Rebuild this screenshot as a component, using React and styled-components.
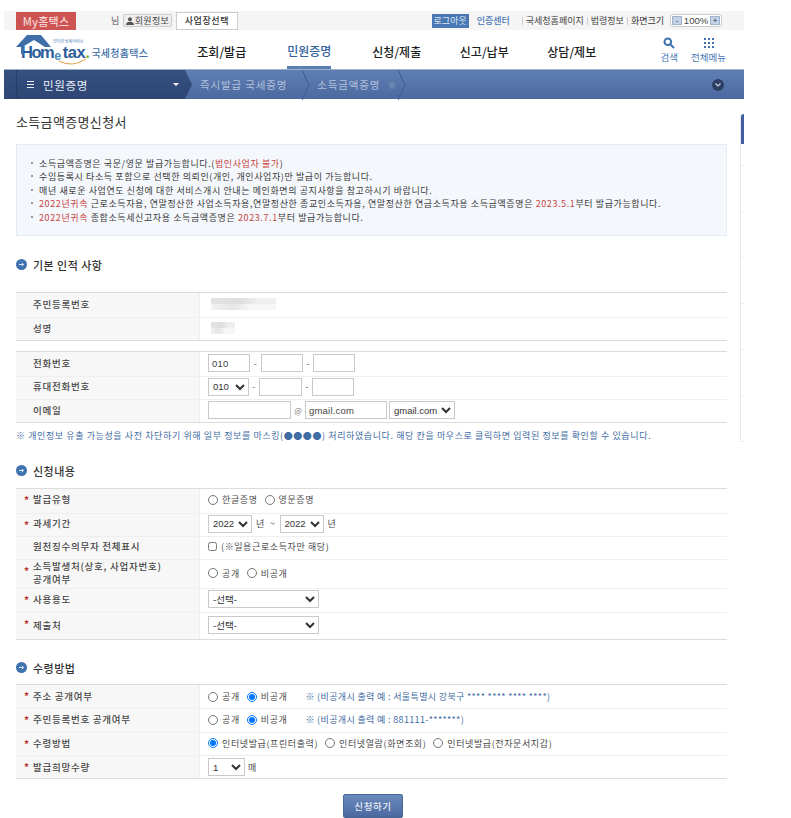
import React from 'react'
import styled, { createGlobalStyle } from 'styled-components'

const GlobalStyle = createGlobalStyle`
  html, body {
    margin: 0;
    padding: 0;
    background: #fff;
  }
  body {
    font-family: "Noto Sans CJK KR", "Noto Sans", "Liberation Sans", sans-serif;
    font-size: 9px;
    letter-spacing: 0.6px;
    color: #3a3a3a;
  }
  input, select {
    font-family: "Liberation Sans", "Noto Sans CJK KR", sans-serif;
    box-sizing: border-box;
  }
`

const Page = styled.div`
  width: 740px;
  margin-left: 4px;
  padding-top: 11px;
`

const TopBar = styled.div`
  height: 19px;
  background: #f5f5f5;
  display: flex;
  align-items: center;
  padding-left: 12px;
`

const MyHome = styled.div`
  width: 60px;
  height: 18px;
  background: #cd5452;
  color: #f6d6d4;
  font-size: 11px;
  font-weight: 500;
  display: flex;
  align-items: center;
  justify-content: center;
  letter-spacing: 0.2px;
`

const Nim = styled.span`
  margin-left: 35px;
  color: #555;
`

const MemberBtn = styled.div`
  margin-left: 3px;
  width: 49px;
  height: 13px;
  border: 1px solid #ccc;
  background: #eee;
  border-radius: 2px;
  box-sizing: border-box;
  display: flex;
  align-items: center;
  justify-content: center;
  gap: 1px;
  color: #444;
  letter-spacing: 0.3px;
  svg { width: 8px; height: 8px; fill: #555; flex: none; }
`

const BizBtn = styled.div`
  margin-left: 4px;
  width: 62px;
  height: 18px;
  box-sizing: border-box;
  border: 1px solid #ccc;
  background: #fff;
  font-weight: 500;
  display: flex;
  align-items: center;
  justify-content: center;
  color: #333;
`

const TopRight = styled.div`
  margin-left: auto;
  margin-right: 22px;
  display: flex;
  align-items: center;
  letter-spacing: 0;
`

const Logout = styled.div`
  width: 37px;
  height: 14px;
  background: #4a78b5;
  color: #dfe8f4;
  display: flex;
  align-items: center;
  justify-content: center;
`

const CertLink = styled.span`
  margin-left: 8px;
  margin-right: 9px;
  color: #4a78b5;
  font-weight: 500;
`

const TopLink = styled.span`
  color: #444;
  padding-left: 3px;
  margin-left: 3px;
  line-height: 8px;
  border-left: 1px solid #ccc;
  &:last-of-type { color: #333; }
`

const ZoomBox = styled.div`
  margin-left: 6px;
  width: 52px;
  height: 13px;
  box-sizing: border-box;
  border: 1px solid #ccc;
  border-radius: 3px;
  background: #fff;
  display: flex;
  align-items: center;
  justify-content: space-between;
  font-family: "Liberation Sans", sans-serif;
  font-size: 9.5px;
  color: #444;
`

const ZoomKey = styled.div`
  width: 10px;
  height: 9px;
  margin: 0 1px;
  background: #c5d3e6;
  border: 1px solid #9fb3cf;
  box-sizing: border-box;
  color: #234;
  font-size: 8px;
  line-height: 7px;
  text-align: center;
`

const Nav = styled.div`
  height: 39px;
  display: flex;
  align-items: center;
  background: #fff;
`

const Logo = styled.div`
  position: relative;
  margin-left: 12px;
  width: 162px;
  height: 39px;
  display: flex;
  align-items: flex-end;
  padding: 0 0 7px 5px;
  box-sizing: border-box;
`

const LogoArt = styled.svg`
  position: absolute;
  left: 0;
  top: 5px;
`

const LogoWord = styled.div`
  font-family: "Liberation Sans", sans-serif;
  font-weight: 700;
  font-size: 16.5px;
  letter-spacing: -1.5px;
  color: #2c5c9a;
  line-height: 16px;
  white-space: nowrap;
`

const LogoE = styled.span`
  color: #4a8ac0;
  font-size: 12.5px;
  letter-spacing: 0;
  margin: 0 1.5px 0 1px;
  position: relative;
  top: 2px;
`

const LogoTax = styled.span`
  letter-spacing: -0.4px;
`

const LogoDot = styled.span`
  color: #7cae2d;
`

const LogoName = styled.div`
  margin: 0 0 2px 3px;
  font-size: 10px;
  font-weight: 500;
  letter-spacing: 0.3px;
  color: #3f6ea8;
  line-height: 14px;
  white-space: nowrap;
`

const LogoTag = styled.span`
  position: absolute;
  left: 37px;
  top: 9px;
  font-size: 4px;
  letter-spacing: 0;
  color: #4a78b5;
  line-height: 5px;
  white-space: nowrap;
`

const Menu = styled.div`
  display: flex;
  height: 100%;
`

const MenuItem = styled.div`
  width: 87.5px;
  display: flex;
  align-items: center;
  justify-content: center;
  font-size: 12px;
  font-weight: 500;
  letter-spacing: 0;
  color: ${p => (p.$active ? '#35629c' : '#1c1c1c')};
  padding-top: 3px;
  box-sizing: border-box;
  & > span {
    height: 100%;
    display: flex;
    align-items: center;
    padding-top: 2px;
    box-sizing: border-box;
    border-bottom: ${p => (p.$active ? '3px solid #5b7fb2' : '0')};
  }
`

const NavTools = styled.div`
  margin-left: auto;
  margin-right: 18px;
  display: flex;
  gap: 13px;
`

const NavTool = styled.div`
  display: flex;
  flex-direction: column;
  align-items: center;
  color: #4a78b5;
  font-size: 9.5px;
  letter-spacing: 0;
  gap: 2px;
  line-height: 12px;
  svg { display: block; }
`

const SubNav = styled.div`
  height: 30px;
  background: linear-gradient(#5f7fb4, #4d699f);
  border-top: 1px solid #9fb0cb;
  box-sizing: border-box;
  display: flex;
  align-items: center;
`

const SubHome = styled.div`
  width: 188px;
  height: 100%;
  background:
    linear-gradient(90deg, transparent 12px, #263d68 12px 13px, transparent 13px),
    linear-gradient(#36507f, #2d4674);
  clip-path: polygon(0 0, 181px 0, 188px 50%, 181px 100%, 0 100%);
  display: flex;
  align-items: center;
  color: #e9eef6;
  font-size: 11.5px;
  letter-spacing: 0.7px;
  padding-left: 23px;
  box-sizing: border-box;
`

const Burger = styled.div`
  width: 7px;
  height: 7px;
  border-top: 1px solid #e9eef6;
  border-bottom: 1px solid #e9eef6;
  position: relative;
  margin-right: 9px;
  box-sizing: border-box;
  &::after {
    content: '';
    position: absolute;
    left: 0;
    right: 0;
    top: 2px;
    height: 1px;
    background: #e9eef6;
  }
`

const Caret = styled.div`
  margin-left: auto;
  margin-right: 13px;
  width: 0;
  height: 0;
  border-left: 3px solid transparent;
  border-right: 3px solid transparent;
  border-top: 3px solid #fff;
`

const Crumb = styled.span`
  color: #b1c0da;
  font-size: 10.5px;
  letter-spacing: 0.85px;
  margin-left: ${p => p.$left}px;
  white-space: nowrap;
`

const CrumbArrow = styled.svg`
  margin-left: ${p => p.$left}px;
  flex: none;
`

const CrumbStar = styled.svg`
  margin-left: 7px;
  flex: none;
`

const CircleDown = styled.div`
  margin-left: auto;
  margin-right: 20px;
  width: 12px;
  height: 12px;
  border-radius: 50%;
  background: #2c3f63;
  display: flex;
  align-items: center;
  justify-content: center;
`

const Body = styled.div`
  display: flex;
`

const Main = styled.div`
  width: 737px;
  padding-left: 12px;
  box-sizing: border-box;
`

const Inner = styled.div`
  width: 711px;
`

const Side = styled.div`
  margin-top: 15px;
  width: 3px;
  height: 328px;
  border-left: 1px solid #e8e8f0;
  display: flex;
  flex-direction: column;
`

const SideTab = styled.div`
  height: ${p => p.$h || 46}px;
  box-sizing: border-box;
  border-bottom: 1px solid #ebebf0;
  &:first-child {
    background: #3f5f9f;
    border-radius: 3px 0 0 0;
    border-bottom: 0;
  }
`

const PageTitle = styled.h1`
  margin: 0;
  padding-top: 13px;
  height: 45px;
  box-sizing: border-box;
  font-size: 13px;
  line-height: 20px;
  font-weight: 400;
  letter-spacing: 0.35px;
  color: #333;
`

const Notice = styled.ul`
  margin: 0;
  height: 92px;
  box-sizing: border-box;
  padding: 12px 0 0 14px;
  list-style: none;
  background: #f4f7fc;
  border: 1px solid #e6ebf2;
`

const NoticeItem = styled.li`
  height: 13.4px;
  line-height: 13.4px;
  white-space: nowrap;
  color: #3a3a3a;
  &::before {
    content: '';
    display: inline-block;
    width: 2px;
    height: 2px;
    background: #999;
    margin-right: 6px;
    vertical-align: 3px;
  }
`

const Red = styled.span`
  color: #c8453f;
`

const SectionHead = styled.h2`
  margin: 0;
  height: ${p => p.$h}px;
  padding-top: ${p => p.$top}px;
  box-sizing: border-box;
  display: flex;
  align-items: flex-start;
  gap: 6px;
  font-size: 11px;
  line-height: 14px;
  font-weight: 500;
  letter-spacing: 0.45px;
  color: #333;
  svg { margin-top: 1px; flex: none; }
`

const Table = styled.div`
  border-top: 1px solid #dcdcdc;
  border-bottom: 1px solid #dcdcdc;
  margin-bottom: ${p => p.$mb || 0}px;
`

const Row = styled.div`
  display: grid;
  grid-template-columns: 184px 1fr;
  height: ${p => p.$h}px;
  box-sizing: border-box;
  border-top: ${p => (p.$first ? '0' : '1px solid #efefef')};
  & > * {
    padding-bottom: ${p => p.$lift || 0}px;
  }
`

const Label = styled.div`
  background: #f7f7f7;
  border-right: 1px solid #ededed;
  padding-left: 17px;
  display: flex;
  align-items: center;
  position: relative;
  font-size: 9.5px;
  font-weight: 500;
  line-height: 13px;
  color: #444;
  letter-spacing: 0.75px;
  &::before {
    content: ${p => (p.$req ? "'*'" : 'none')};
    position: absolute;
    left: 8px;
    top: 5px;
    color: #b8322e;
    font-size: 10px;
    font-weight: 700;
    line-height: 12px;
  }
`

const Field = styled.div`
  padding-left: 8px;
  display: flex;
  align-items: center;
  color: #4a4a4a;
  letter-spacing: 0.6px;
  white-space: nowrap;
`

const Mosaic = styled.div`
  margin-left: 3px;
  width: ${p => p.$w}px;
  height: 12px;
  background:
    linear-gradient(90deg, #e3e3e3, #dedede 45%, #eeeeee 70%, #f0f0f0) top / 100% 50% no-repeat,
    linear-gradient(90deg, #f1f1f1, #e6e6e6 35%, #f6f6f6 60%, #f7f7f7) bottom / 100% 50% no-repeat;
`

const TextBox = styled.input`
  width: ${p => p.$w}px;
  height: 18px;
  border: 1px solid #c9c9c9;
  padding: 0 3px;
  font-size: 9.5px;
  letter-spacing: 0.2px;
  color: #444;
  background: #fff;
  border-radius: 0;
  outline: none;
`

const Picker = styled.select`
  width: ${p => p.$w}px;
  height: 18px;
  margin-left: ${p => p.$left || 0}px;
  border: 1px solid #c9c9c9;
  padding: 0;
  font-size: 9.5px;
  color: #333;
  background: #fff;
  border-radius: 0;
`

const Dash = styled.span`
  width: ${p => p.$w || 11}px;
  text-align: center;
  color: #666;
`

const At = styled.span`
  width: 14px;
  text-align: center;
  font-size: 8px;
  color: #777;
  letter-spacing: 0;
`

const Unit = styled.span`
  margin-left: ${p => p.$left}px;
`

const Choice = styled.label`
  display: inline-flex;
  align-items: center;
  gap: 4px;
  margin-right: 7px;
`

const Radio = styled.input.attrs({ type: 'radio' })`
  width: 10px;
  height: 10px;
  margin: 0;
`

const Check = styled.input.attrs({ type: 'checkbox' })`
  width: 9px;
  height: 9px;
  margin: 0 4px 0 0;
`

const Hint = styled.span`
  color: #3f6ca3;
  margin-left: 11px;
  letter-spacing: 0.35px;
`

const Note = styled.p`
  margin: 0;
  height: 41px;
  padding-top: 6px;
  box-sizing: border-box;
  line-height: 14px;
  color: #3f6ca3;
  letter-spacing: 0.6px;
  white-space: nowrap;
`

const Actions = styled.div`
  display: flex;
  justify-content: center;
  padding: 15px 0 0 3px;
`

const Submit = styled.button`
  width: 60px;
  height: 24px;
  border: 1px solid #4a6699;
  border-radius: 2px;
  background: linear-gradient(#6a8abb, #4a689f);
  color: #e9eef6;
  font-family: inherit;
  font-size: 9.5px;
  font-weight: 500;
  letter-spacing: 0.6px;
  padding: 0;
`

function Bullet() {
  return (
    <svg width="11" height="11" viewBox="0 0 11 11">
      <circle cx="5.5" cy="5.5" r="5.5" fill="#3f72ae" />
      <path d="M3 5.5h4.5M5.8 3.800l1.800 1.700-1.800 1.700" fill="none" stroke="#dbe6f3" strokeWidth="1" />
    </svg>
  )
}

function Options({ name, items, checked }) {
  return items.map(item => (
    <Choice key={item}>
      <Radio name={name} defaultChecked={item === checked} />
      {item}
    </Choice>
  ))
}

function Years({ left }) {
  return (
    <Picker $w={44} $left={left} defaultValue="2022">
      <option>2022</option>
    </Picker>
  )
}

function Header() {
  return (
    <>
      <TopBar>
        <MyHome>My홈택스</MyHome>
        <Nim>님</Nim>
        <MemberBtn>
          <svg viewBox="0 0 8 8"><circle cx="4" cy="2.200" r="2" /><path d="M0 8c0-2.400 1.600-3.200 4-3.200S8 5.600 8 8z" /></svg>
          회원정보
        </MemberBtn>
        <BizBtn>사업장선택</BizBtn>
        <TopRight>
          <Logout>로그아웃</Logout>
          <CertLink>인증센터</CertLink>
          <TopLink>국세청홈페이지</TopLink>
          <TopLink>법령정보</TopLink>
          <TopLink>화면크기</TopLink>
          <ZoomBox>
            <ZoomKey>-</ZoomKey>
            100%
            <ZoomKey>+</ZoomKey>
          </ZoomBox>
        </TopRight>
      </TopBar>
      <Nav>
        <Logo>
          <LogoArt width="76" height="30" viewBox="0 0 76 30" fill="none">
            <path d="M0 12 L11 0 H25 L35 12 H29 L18 5 L8 11 V19 H5 V12z" fill="#3f6ea8" />
            <path d="M43 26 Q56 33 70 24" stroke="#e0a040" strokeWidth="1" />
          </LogoArt>
          <LogoTag>인터넷 납세서비스</LogoTag>
          <LogoWord>Hom<LogoE>e</LogoE><LogoTax>tax</LogoTax><LogoDot>.</LogoDot></LogoWord>
          <LogoName>국세청홈택스</LogoName>
        </Logo>
        <Menu>
          <MenuItem>조회/발급</MenuItem>
          <MenuItem $active><span>민원증명</span></MenuItem>
          <MenuItem>신청/제출</MenuItem>
          <MenuItem>신고/납부</MenuItem>
          <MenuItem>상담/제보</MenuItem>
        </Menu>
        <NavTools>
          <NavTool>
            <svg width="12" height="12" viewBox="0 0 12 12" fill="none" stroke="#3f72ae" strokeWidth="2">
              <circle cx="4.800" cy="4.800" r="3.300" />
              <path d="M7.500 7.500L11 11" />
            </svg>
            검색
          </NavTool>
          <NavTool>
            <svg width="12" height="12" viewBox="0 0 12 12" fill="#3f72ae">
              <path d="M1 1h2v2H1zM5 1h2v2H5zM9 1h2v2H9zM1 5h2v2H1zM5 5h2v2H5zM9 5h2v2H9zM1 9h2v2H1zM5 9h2v2H5zM9 9h2v2H9z" />
            </svg>
            전체메뉴
          </NavTool>
        </NavTools>
      </Nav>
      <SubNav>
        <SubHome>
          <Burger />
          민원증명
          <Caret />
        </SubHome>
        <Crumb $left={8}>즉시발급 국세증명</Crumb>
        <CrumbArrow $left={15} width="8" height="30" viewBox="0 0 8 30" fill="none" stroke="#3f5a8c">
          <path d="M0 0L7 15L0 30" />
        </CrumbArrow>
        <Crumb $left={7}>소득금액증명</Crumb>
        <CrumbStar width="10" height="10" viewBox="0 0 10 10" fill="#6c86b4">
          <path d="M5 0l1.500 3.300 3.500.400-2.600 2.400.700 3.500L5 7.800 1.900 9.600l.700-3.500L0 3.700l3.500-.400z" />
        </CrumbStar>
        <CrumbArrow $left={1} width="8" height="30" viewBox="0 0 8 30" fill="none" stroke="#3f5a8c">
          <path d="M0 0L7 15L0 30" />
        </CrumbArrow>
        <CircleDown>
          <svg width="6" height="4" viewBox="0 0 6 4" fill="none" stroke="#c9d3e4" strokeWidth="1.200">
            <path d="M.5.500L3 3 5.500.500" />
          </svg>
        </CircleDown>
      </SubNav>
    </>
  )
}

export default function App() {
  return (
    <>
      <GlobalStyle />
      <Page>
        <Header />
        <Body>
          <Main>
            <Inner>
              <PageTitle>소득금액증명신청서</PageTitle>
              <Notice>
                <NoticeItem>소득금액증명은 국문/영문 발급가능합니다.(<Red>법인사업자 불가</Red>)</NoticeItem>
                <NoticeItem>수임등록시 타소득 포함으로 선택한 의뢰인(개인, 개인사업자)만 발급이 가능합니다.</NoticeItem>
                <NoticeItem>매년 새로운 사업연도 신청에 대한 서비스개시 안내는 메인화면의 공지사항을 참고하시기 바랍니다.</NoticeItem>
                <NoticeItem><Red>2022년귀속</Red> 근로소득자용, 연말정산한 사업소득자용,연말정산한 종교인소득자용, 연말정산한 연금소득자용 소득금액증명은 <Red>2023.5.1</Red>부터 발급가능합니다.</NoticeItem>
                <NoticeItem><Red>2022년귀속</Red> 종합소득세신고자용 소득금액증명은 <Red>2023.7.1</Red>부터 발급가능합니다.</NoticeItem>
              </Notice>

              <SectionHead $h={56} $top={22}><Bullet />기본 인적 사항</SectionHead>
              <Table $mb={10}>
                <Row $h={24} $lift={2} $first>
                  <Label>주민등록번호</Label>
                  <Field><Mosaic $w={65} /></Field>
                </Row>
                <Row $h={23} $lift={2}>
                  <Label>성명</Label>
                  <Field><Mosaic $w={24} /></Field>
                </Row>
              </Table>
              <Table>
                <Row $h={24} $lift={2} $first>
                  <Label>전화번호</Label>
                  <Field>
                    <TextBox $w={42} defaultValue="010" />
                    <Dash>-</Dash>
                    <TextBox $w={42} />
                    <Dash $w={10}>-</Dash>
                    <TextBox $w={42} />
                  </Field>
                </Row>
                <Row $h={23} $lift={3}>
                  <Label>휴대전화번호</Label>
                  <Field>
                    <Picker $w={41} defaultValue="010"><option>010</option></Picker>
                    <Dash $w={10}>-</Dash>
                    <TextBox $w={43} />
                    <Dash $w={10}>-</Dash>
                    <TextBox $w={42} />
                  </Field>
                </Row>
                <Row $h={23} $lift={2}>
                  <Label>이메일</Label>
                  <Field>
                    <TextBox $w={83} />
                    <At>@</At>
                    <TextBox $w={82} defaultValue="gmail.com" />
                    <Picker $w={66} $left={2} defaultValue="gmail.com"><option>gmail.com</option></Picker>
                  </Field>
                </Row>
              </Table>
              <Note>※ 개인정보 유출 가능성을 사전 차단하기 위해 일부 정보를 마스킹(●●●●) 처리하였습니다. 해당 칸을 마우스로 클릭하면 입력된 정보를 확인할 수 있습니다.</Note>

              <SectionHead $h={24} $top={0}><Bullet />신청내용</SectionHead>
              <Table>
                <Row $h={24} $lift={3} $first>
                  <Label $req>발급유형</Label>
                  <Field><Options name="type" items={['한글증명', '영문증명']} /></Field>
                </Row>
                <Row $h={23} $lift={3}>
                  <Label $req>과세기간</Label>
                  <Field>
                    <Years />
                    <Unit $left={4}>년</Unit>
                    <Unit $left={5}>~</Unit>
                    <Years left={4} />
                    <Unit $left={4}>년</Unit>
                  </Field>
                </Row>
                <Row $h={23} $lift={3}>
                  <Label>원천징수의무자 전체표시</Label>
                  <Field><Check />(※일용근로소득자만 해당)</Field>
                </Row>
                <Row $h={29} $lift={2}>
                  <Label $req>소득발생처(상호, 사업자번호)<br />공개여부</Label>
                  <Field><Options name="open" items={['공개', '비공개']} /></Field>
                </Row>
                <Row $h={24} $lift={3}>
                  <Label $req>사용용도</Label>
                  <Field><Picker $w={111} defaultValue="-선택-"><option>-선택-</option></Picker></Field>
                </Row>
                <Row $h={27} $lift={2}>
                  <Label $req>제출처</Label>
                  <Field><Picker $w={111} defaultValue="-선택-"><option>-선택-</option></Picker></Field>
                </Row>
              </Table>

              <SectionHead $h={44} $top={21}><Bullet />수령방법</SectionHead>
              <Table>
                <Row $h={23} $first>
                  <Label $req>주소 공개여부</Label>
                  <Field>
                    <Options name="addr" items={['공개', '비공개']} checked="비공개" />
                    <Hint>※ (비공개시 출력 예 : 서울특별시 강북구 **** **** **** ****)</Hint>
                  </Field>
                </Row>
                <Row $h={24} $lift={2}>
                  <Label $req>주민등록번호 공개여부</Label>
                  <Field>
                    <Options name="rrn" items={['공개', '비공개']} checked="비공개" />
                    <Hint>※ (비공개시 출력 예 : 881111-*******)</Hint>
                  </Field>
                </Row>
                <Row $h={23} $lift={2}>
                  <Label $req>수령방법</Label>
                  <Field>
                    <Options name="how" items={['인터넷발급(프린터출력)', '인터넷열람(화면조회)', '인터넷발급(전자문서지갑)']} checked="인터넷발급(프린터출력)" />
                  </Field>
                </Row>
                <Row $h={23}>
                  <Label $req>발급희망수량</Label>
                  <Field>
                    <Picker $w={37} defaultValue="1"><option>1</option></Picker>
                    <Unit $left={3}>매</Unit>
                  </Field>
                </Row>
              </Table>
              <Actions>
                <Submit>신청하기</Submit>
              </Actions>
            </Inner>
          </Main>
          <Side>
            <SideTab $h={30} />
            <SideTab $h={22} />
            <SideTab />
            <SideTab />
            <SideTab />
            <SideTab />
            <SideTab />
            <SideTab />
          </Side>
        </Body>
      </Page>
    </>
  )
}
